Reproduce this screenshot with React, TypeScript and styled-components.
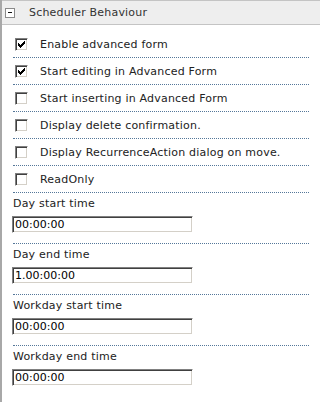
import React, { FC } from 'react';
import styled, { createGlobalStyle } from 'styled-components';

const GlobalStyle = createGlobalStyle`
  html, body {
    margin: 0;
    padding: 0;
    background: #ffffff;
  }
  body {
    font-family: "DejaVu Sans", Verdana, sans-serif;
    font-size: 11px;
    color: #222222;
  }
`;

const Panel = styled.div`
  box-sizing: border-box;
  min-height: 100vh;
  border-left: 2px solid #a8a8a8;
  background: #ffffff;
`;

const Header = styled.div`
  display: flex;
  align-items: center;
  height: 23px;
  border-top: 1px solid #c4c4c4;
  border-bottom: 1px solid #c4c4c4;
  background: #eeeeee;
  padding-left: 3px;
  gap: 14px;
`;

const Toggle = styled.span`
  box-sizing: border-box;
  position: relative;
  width: 10px;
  height: 10px;
  margin-top: 1px;
  border: 1px solid #8a8a8a;
  background: #ffffff;

  &::after {
    content: '';
    position: absolute;
    left: 2px;
    top: 3px;
    width: 4px;
    height: 1px;
    background: #111111;
  }
`;

const Title = styled.span`
  color: #333333;
  letter-spacing: 0.2px;
`;

const Body = styled.div`
  padding: 6px 11px 0 11px;
`;

const CheckRow = styled.label`
  display: flex;
  align-items: center;
  gap: 12px;
  height: 26px;
  padding-left: 2px;
  border-bottom: 1px dotted #557799;
  letter-spacing: 0.2px;
`;

const Box = styled.span`
  box-sizing: border-box;
  display: flex;
  align-items: center;
  justify-content: center;
  width: 13px;
  height: 13px;
  margin-top: 1px;
  border: 1px solid;
  border-color: #808080 #ffffff #ffffff #808080;
  box-shadow: inset 1px 1px 0 #404040, inset -1px -1px 0 #d4d0c8;
  background: #ffffff;
`;

const Field = styled.div`
  display: flex;
  flex-direction: column;
  padding: 4px 0 10px;
  border-bottom: 1px dotted #557799;

  &:last-child {
    border-bottom: none;
  }
`;

const FieldLabel = styled.span`
  line-height: 14px;
  letter-spacing: 0.2px;
  margin-bottom: 5px;
`;

const TimeInput = styled.input`
  box-sizing: border-box;
  width: 181px;
  height: 17px;
  margin: 0 0 0 -1px;
  padding: 0 0 0 2px;
  font-family: "DejaVu Sans", Verdana, sans-serif;
  font-size: 11px;
  color: #000000;
  background: #ffffff;
  border: 1px solid;
  border-color: #808080 #ffffff #ffffff #808080;
  box-shadow: inset 1px 1px 0 #404040, inset -1px -1px 0 #d4d0c8;
  outline: none;
`;

// pixel tick, as the classic windows checkbox draws it
const CheckMark = () => (
  <svg width="7" height="7" viewBox="0 0 7 7">
    <path
      d="M0 2h1v1h1v1h1v-1h1v-1h1v-1h1v-1h1v3h-1v1h-1v1h-1v1h-1v1h-1v-1h-1v-1h-1z"
      fill="#000"
    />
  </svg>
);

const Checkbox: FC<{ checked?: boolean; label: string }> = ({ checked, label }) => (
  <CheckRow>
    <Box role="checkbox" aria-checked={!!checked}>
      {checked && <CheckMark />}
    </Box>
    <span>{label}</span>
  </CheckRow>
);

const options = [
  { label: 'Enable advanced form', checked: true },
  { label: 'Start editing in Advanced Form', checked: true },
  { label: 'Start inserting in Advanced Form', checked: false },
  { label: 'Display delete confirmation.', checked: false },
  { label: 'Display RecurrenceAction dialog on move.', checked: false },
  { label: 'ReadOnly', checked: false }
];

const times = [
  { label: 'Day start time', value: '00:00:00' },
  { label: 'Day end time', value: '1.00:00:00' },
  { label: 'Workday start time', value: '00:00:00' },
  { label: 'Workday end time', value: '00:00:00' }
];

export default function App() {
  return (
    <>
      <GlobalStyle />
      <Panel>
        <Header>
          <Toggle />
          <Title>Scheduler Behaviour</Title>
        </Header>
        <Body>
          {options.map((o) => (
            <Checkbox key={o.label} label={o.label} checked={o.checked} />
          ))}
          {times.map((t) => (
            <Field key={t.label}>
              <FieldLabel>{t.label}</FieldLabel>
              <TimeInput defaultValue={t.value} />
            </Field>
          ))}
        </Body>
      </Panel>
    </>
  );
}
